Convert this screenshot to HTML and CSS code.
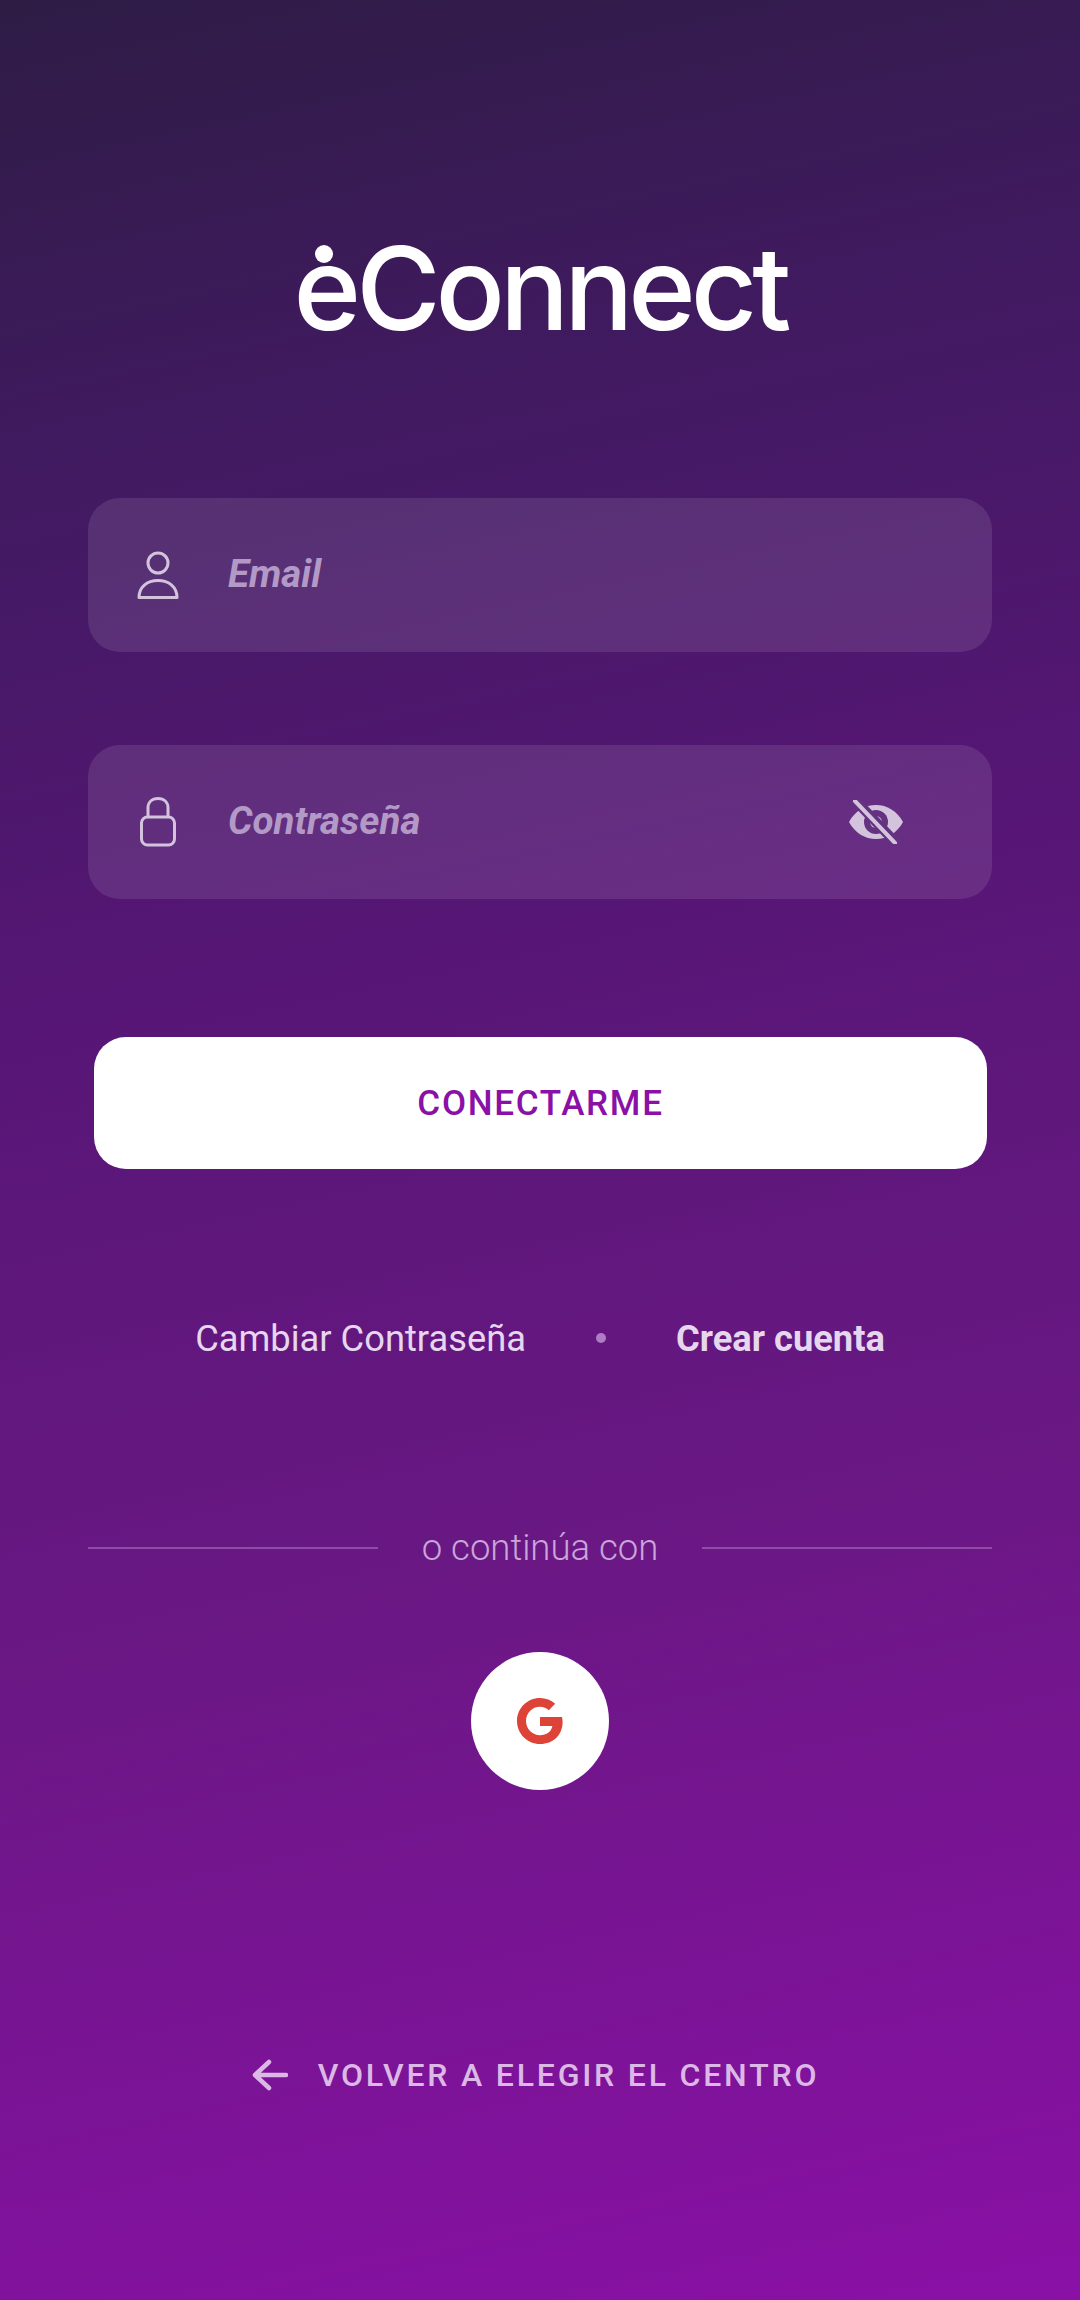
FILE: index.html
```html
<!DOCTYPE html>
<html lang="es">
<head>
    <meta charset="UTF-8">
    <meta name="viewport" content="width=device-width, initial-scale=1.0">
    <title>eConnect</title>
    <link rel="stylesheet" href="styles.css">
</head>
<body>
    <div class="screen">
        <div class="logo"><span class="logo-e">e</span>Connect</div>

        <div class="field field-email">
            <svg class="field-icon" width="44" height="48" viewBox="0 0 44 48" fill="none" stroke="#d3c3dd" stroke-width="3">
                <circle cx="22" cy="12" r="10"/>
                <path d="M3 46.500 C3 36 11 29.500 22 29.500 C33 29.500 41 36 41 46.500 Z" stroke-linejoin="round"/>
            </svg>
            <span class="field-label">Email</span>
        </div>

        <div class="field field-pass">
            <svg class="field-icon" width="44" height="50" viewBox="0 0 44 50" fill="none" stroke="#d3c3dd" stroke-width="3">
                <path d="M12 20 V11 C12 5 16 1.500 22 1.500 C28 1.500 32 5 32 11 V20"/>
                <rect x="5.500" y="20" width="33" height="28" rx="6"/>
            </svg>
            <span class="field-label">Contraseña</span>
            <svg class="eye" width="56" height="44" viewBox="0 0 56 44">
                <path fill="#d3c3dd" d="M1 22 C7 11 17 5 28 5 C39 5 49 11 55 22 C49 33 39 39 28 39 C17 39 7 33 1 22 Z"/>
                <circle cx="28" cy="22" r="12" fill="#643280"/>
                <circle cx="28" cy="22" r="6" fill="#d3c3dd"/>
                <path d="M6 -1 L50 45" stroke="#643280" stroke-width="10"/>
                <path d="M7 1 L47 43" stroke="#d3c3dd" stroke-width="4" stroke-linecap="round"/>
            </svg>
        </div>

        <div class="login-btn">CONECTARME</div>

        <div class="links">
            <span class="link">Cambiar Contraseña</span>
            <span class="dot"></span>
            <span class="link link-bold">Crear cuenta</span>
        </div>

        <div class="divider">
            <span class="line"></span>
            <span class="divider-text">o continúa con</span>
            <span class="line"></span>
        </div>

        <div class="google">
            <svg width="46" height="46" viewBox="0 0 46 46">
                <path fill="#dd4337" d="M23 0 C29 0 34 2.200 38.200 5.800 L31.800 12.200 C29.400 10.100 26.500 8.800 23 8.800 C15.200 8.800 9 15.200 9 23 C9 30.800 15.200 37.200 23 37.200 C29.600 37.200 34.200 33.800 35.400 28 L23 28 L23 19 L45 19 C45.400 20.600 45.600 22.400 45.600 24 C45.600 37 36.400 46 23 46 C10.300 46 0 35.700 0 23 C0 10.300 10.300 0 23 0 Z"/>
            </svg>
        </div>

        <div class="back">
            <svg width="36" height="32" viewBox="0 0 36 32" fill="none" stroke="#dcb8e6" stroke-width="4.500" stroke-linecap="round" stroke-linejoin="round">
                <path d="M17 3 L3 16 L17 29 M3 16 H34"/>
            </svg>
            <span class="back-text">VOLVER A ELEGIR EL CENTRO</span>
        </div>
    </div>
</body>
</html>
```

FILE: styles.css
```css
* {
    box-sizing: border-box;
}

body {
    margin: 0;
    font-family: Roboto, "Noto Sans", sans-serif;
}

.screen {
    width: 1080px;
    height: 2300px;
    padding: 216px 88px 0 88px;
    overflow: hidden;
    display: flex;
    flex-direction: column;
    background: linear-gradient(168deg, #2e1c45 0%, #421a62 20%, #561675 40%, #691883 65%, #8a10a6 100%);
}

/* Logo */
.logo {
    height: 130px;
    margin-bottom: 152px;
    padding-top: 15px;
    text-align: center;
    color: #fff;
    font-family: Inter, "Liberation Sans", sans-serif;
    font-size: 115px;
    font-weight: 500;
    line-height: 115px;
    letter-spacing: -5px;
}

.logo-e {
    position: relative;
}

/* the dot over the e */
.logo-e::before {
    content: "";
    position: absolute;
    top: 26px;
    left: 21px;
    width: 18px;
    height: 18px;
    border-radius: 50%;
    background-color: #fff;
}

/* Input fields */
.field {
    height: 154px;
    padding: 0 88px 0 48px;
    display: flex;
    align-items: center;
    border-radius: 32px;
    background-color: rgba(255, 255, 255, 0.1);
}

.field-email {
    margin-bottom: 93px;
}

.field-pass {
    margin-bottom: 138px;
}

.field-icon {
    flex: none;
}

.field-label {
    margin-left: 48px;
    margin-bottom: 3px;
    flex: 1;
    color: #b39ac6;
    font-size: 38.500px;
    font-style: italic;
    font-weight: 700;
}

.eye {
    flex: none;
}

/* Main button */
.login-btn {
    height: 132px;
    margin: 0 5px 144px 6px;
    display: flex;
    align-items: center;
    justify-content: center;
    border-radius: 32px;
    background-color: #fff;
    color: #8a10a6;
    font-size: 35px;
    font-weight: 500;
    letter-spacing: 1.700px;
}

/* Links row */
.links {
    height: 50px;
    margin-bottom: 165px;
    display: flex;
    align-items: center;
    justify-content: center;
    color: #e6d6ee;
    font-size: 36.300px;
}

.link {
    font-weight: 400;
}

.link-bold {
    font-weight: 700;
}

.dot {
    width: 10px;
    height: 10px;
    margin: 0 70px;
    border-radius: 50%;
    background-color: #ad7cc4;
}

/* Divider */
.divider {
    height: 40px;
    margin-bottom: 84px;
    display: flex;
    align-items: center;
    gap: 44px;
    color: #c9a5d9;
    font-size: 36.500px;
    font-weight: 300;
}

.divider-text {
    margin-bottom: 2px;
}

.line {
    flex: 1;
    height: 2px;
    background-color: #8e4ca9;
}

.google {
    width: 138px;
    height: 138px;
    margin: 0 auto 265px auto;
    display: flex;
    align-items: center;
    justify-content: center;
    border-radius: 50%;
    background-color: #fff;
}

/* Back link */
.back {
    height: 40px;
    margin-right: 9px;
    display: flex;
    align-items: center;
    justify-content: center;
    gap: 30px;
    color: #dcb8e6;
    font-size: 32px;
    font-weight: 500;
    letter-spacing: 2.800px;
}
```
